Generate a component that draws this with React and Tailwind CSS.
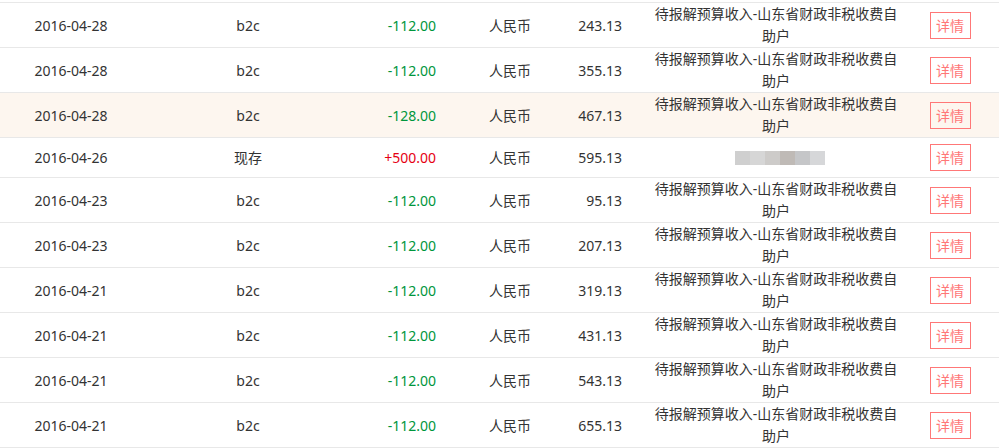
import React from "react";

const DESC = "待报解预算收入-山东省财政非税收费自助户";

const rows = [
  { date: "2016-04-28", type: "b2c", amt: "-112.00", bal: "243.13" },
  { date: "2016-04-28", type: "b2c", amt: "-112.00", bal: "355.13" },
  { date: "2016-04-28", type: "b2c", amt: "-128.00", bal: "467.13", hl: true },
  { date: "2016-04-26", type: "现存", amt: "+500.00", bal: "595.13", blur: true },
  { date: "2016-04-23", type: "b2c", amt: "-112.00", bal: "95.13" },
  { date: "2016-04-23", type: "b2c", amt: "-112.00", bal: "207.13" },
  { date: "2016-04-21", type: "b2c", amt: "-112.00", bal: "319.13" },
  { date: "2016-04-21", type: "b2c", amt: "-112.00", bal: "431.13" },
  { date: "2016-04-21", type: "b2c", amt: "-112.00", bal: "543.13" },
  { date: "2016-04-21", type: "b2c", amt: "-112.00", bal: "655.13", last: true },
];

function Blur() {
  return (
    <div className="flex h-[14px] w-[90px] ml-[84px]">
      <div className="w-[15px] bg-[#cfcfcf]" />
      <div className="w-[15px] bg-[#d6d6d6]" />
      <div className="w-[15px] bg-[#cdcbc9]" />
      <div className="w-[15px] bg-[#bfbab6]" />
      <div className="w-[15px] bg-[#c5c6c8]" />
      <div className="w-[15px] bg-[#d6d7d9]" />
    </div>
  );
}

export default function App() {
  return (
    <div
      className="w-[999px] h-[448px] bg-white overflow-hidden pt-[2px] text-[14px] text-[#333]"
      style={{ fontFamily: '"Noto Sans", "Noto Sans CJK SC", sans-serif' }}
    >
      {rows.map((r, i) => (
        <div
          key={i}
          className={
            "flex items-center border-t border-[#e8e8e8] " +
            (r.blur ? "h-[40px] " : r.last ? "h-[46px] border-b " : "h-[45px] ") +
            (r.hl ? "bg-[#fdf6ef]" : "bg-white")
          }
        >
          <div className="w-[142px] text-center">{r.date}</div>
          <div className="w-[212px] text-center">{r.type}</div>
          <div
            className={
              "w-[96px] text-right pr-[14px] " +
              (r.amt.startsWith("+") ? "text-[#e60012]" : "text-[#00963c]")
            }
          >
            {r.amt}
          </div>
          <div className="w-[120px] text-center">人民币</div>
          <div className="w-[66px] text-right pr-[14px]">{r.bal}</div>
          <div className="w-[280px] px-[15px] text-center leading-[22px]">
            {r.blur ? <Blur /> : DESC}
          </div>
          <div className="w-[68px] flex justify-center">
            <div className="w-[41px] h-[27px] border border-[#f77] text-[#f77] flex items-center justify-center">
              详情
            </div>
          </div>
        </div>
      ))}
    </div>
  );
}
